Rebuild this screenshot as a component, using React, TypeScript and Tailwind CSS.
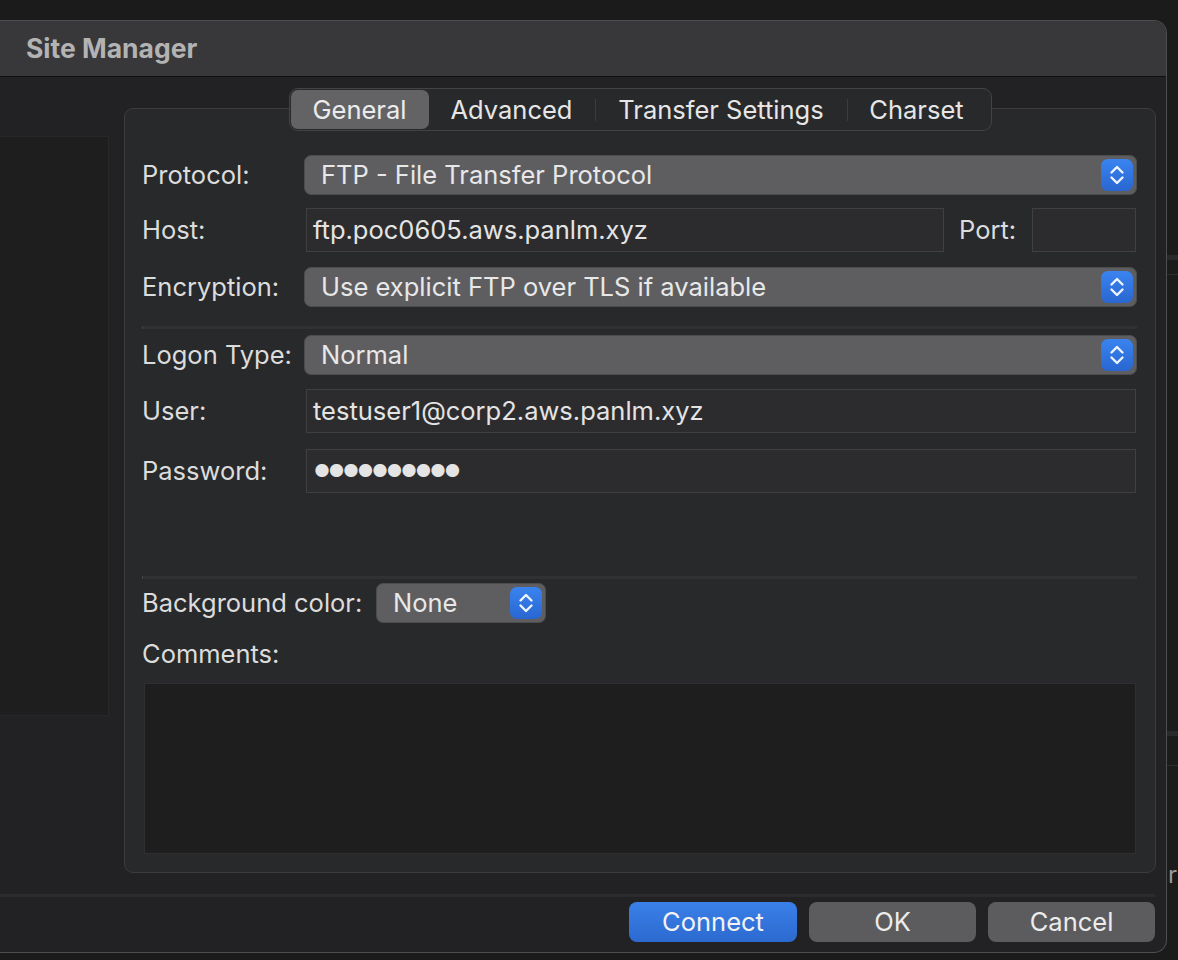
import React from "react";

const Stepper = () => (
  <div className="w-[32px] h-[32px] rounded-[7px] bg-linear-to-b from-[#3a84f0] to-[#2966d0] flex items-center justify-center shrink-0">
    <svg width="32" height="32" viewBox="0 0 32 32" fill="none" stroke="#eef4ff" strokeWidth="2.4" strokeLinecap="round" strokeLinejoin="round">
      <path d="M10.5 13.5 L16 8 L21.5 13.5" />
      <path d="M10.5 18.5 L16 24 L21.5 18.5" />
    </svg>
  </div>
);

const Select = ({ value, className = "" }: { value: string; className?: string }) => (
  <div className={`h-[40px] rounded-[7px] bg-[#5e5e60] border border-[#4c4c4e] flex items-center justify-between pl-[16px] pr-[3px] ${className}`}>
    <span className="text-[25.5px] text-[#e8e8e8] leading-none">{value}</span>
    <Stepper />
  </div>
);

const Input = ({ value, className = "", dots = false }: { value?: string; className?: string; dots?: boolean }) => (
  <div className={`h-[44px] bg-[#2c2c2e] border border-[#404042] flex items-center pl-[6px] ${className}`}>
    {value ? (
      <span className={`${dots ? "text-[17.5px] tracking-[-1.5px] pl-[1px]" : "text-[25.5px]"} text-[#e4e4e4] leading-none`}>{value}</span>
    ) : null}
  </div>
);

const Label = ({ children }: { children: React.ReactNode }) => (
  <div className="w-[162px] shrink-0 text-[25.5px] text-[#dcdcdc] leading-none">{children}</div>
);

export default function App() {
  return (
    <div className="h-[960px] w-[1178px] bg-[#1b1b1c] overflow-hidden font-['Inter','Noto_Sans',sans-serif] pt-[20px] relative">
      <div className="flex">
        <div className="w-[1167px] h-[933px] rounded-tr-[13px] rounded-br-[13px] border border-l-0 border-[#4e4e50] bg-[#222224] flex flex-col overflow-hidden shrink-0">
          {/* Title bar */}
          <div className="h-[56px] bg-[#38383a] border-b border-[#0e0e0e] flex items-center pl-[26px] shrink-0">
            <span className="text-[26.5px] font-bold text-[#b3b3b3] leading-none">Site Manager</span>
          </div>

          {/* Body */}
          <div className="flex">
            <div className="w-[109px] h-[580px] mt-[59px] bg-[#1e1e1e] border border-[#28282a] border-l-0 shrink-0" />
            <div className="ml-[15px] w-[1032px] pt-[11px] flex flex-col items-center">
              {/* Tabs */}
              <div className="relative z-10 h-[43px] w-[703px] rounded-[9px] bg-[#28292b] border border-[#434345] flex items-center pl-[1px]">
                <div className="w-[138px] h-[39px] rounded-[7px] bg-[#636366] flex items-center justify-center text-[25.5px] text-[#ececec] leading-none">General</div>
                <div className="w-[166px] flex items-center justify-center text-[25.5px] text-[#e6e6e6] leading-none">Advanced</div>
                <div className="w-[1px] h-[22px] bg-[#3c3c3e]" />
                <div className="w-[251px] flex items-center justify-center text-[25.5px] text-[#e6e6e6] leading-none">Transfer Settings</div>
                <div className="w-[1px] h-[22px] bg-[#3c3c3e]" />
                <div className="w-[142px] flex items-center justify-center pr-[4px] text-[25.5px] text-[#e6e6e6] leading-none">Charset</div>
              </div>
              {/* Group box */}
              <div className="-mt-[23px] w-[1032px] h-[765px] rounded-[9px] border border-[#3c3c3e] bg-[#28292b] pt-[46px] pl-[17px] pr-[18px] flex flex-col">
                <div className="flex items-center">
                  <Label>Protocol:</Label>
                  <Select value="FTP - File Transfer Protocol" className="flex-1" />
                </div>
                <div className="flex items-center mt-[13px]">
                  <Label>Host:</Label>
                  <Input value="ftp.poc0605.aws.panlm.xyz" className="w-[638px] ml-[2px]" />
                  <div className="ml-[15px] w-[73px] text-[25.5px] text-[#dcdcdc] leading-none">Port:</div>
                  <Input className="w-[104px]" />
                </div>
                <div className="flex items-center mt-[15px]">
                  <Label>Encryption:</Label>
                  <Select value="Use explicit FTP over TLS if available" className="flex-1" />
                </div>
                <div className="mt-[19px] h-[3px] bg-[#313133] border-l border-[#444]" />
                <div className="flex items-center mt-[6px]">
                  <Label>Logon Type:</Label>
                  <Select value="Normal" className="flex-1" />
                </div>
                <div className="flex items-center mt-[14px]">
                  <Label>User:</Label>
                  <Input value="testuser1@corp2.aws.panlm.xyz" className="flex-1 ml-[2px] mr-[1px]" />
                </div>
                <div className="flex items-center mt-[16px]">
                  <Label>Password:</Label>
                  <Input className="flex-1 ml-[2px] mr-[1px]" value="●●●●●●●●●●" dots />
                </div>
                <div className="mt-[83px] h-[3px] bg-[#313133] border-l border-[#444]" />
                <div className="flex items-center mt-[4px]">
                  <div className="w-[234px] shrink-0 text-[25.5px] text-[#dcdcdc] leading-none">Background color:</div>
                  <Select value="None" className="w-[170px]" />
                </div>
                <div className="mt-[18px] text-[25.5px] text-[#dcdcdc] leading-none h-[26px]">Comments:</div>
                <div className="mt-[16px] ml-[2px] mr-[1px] h-[171px] bg-[#1e1e1e] border border-[#2f2f31]" />
              </div>
            </div>
          </div>

          {/* Footer separator */}
          <div className="mt-[21px] mr-[11px] h-[3px] bg-[#2b2b2d]" />
          {/* Buttons */}
          <div className="mt-[5px] flex justify-end gap-[12px] pr-[11px]">
            <div className="w-[168px] h-[40px] rounded-[8px] bg-linear-to-b from-[#3a80e8] to-[#2c6ad0] flex items-center justify-center text-[25.5px] text-[#f2f2f2] leading-none">Connect</div>
            <div className="w-[167px] h-[40px] rounded-[8px] bg-[#5c5c5e] flex items-center justify-center text-[25.5px] text-[#ececec] leading-none">OK</div>
            <div className="w-[167px] h-[40px] rounded-[8px] bg-[#5c5c5e] flex items-center justify-center text-[25.5px] text-[#ececec] leading-none">Cancel</div>
          </div>
        </div>
        {/* Outside strip */}
        <div className="flex-1 flex flex-col pt-[235px]">
          <div className="h-[5px] bg-[#2a2a2c]" />
          <div className="h-[15px] border-b border-[#2e2e30]" />
          <div className="h-[456px]" />
          <div className="h-[5px] bg-[#2a2a2c]" />
          <div className="h-[30px] border-b border-[#2e2e30]" />
          <div className="mt-[97px] pl-[1px] text-[24px] text-[#9a9a9a] leading-none">r</div>
        </div>
      </div>
    </div>
  );
}
